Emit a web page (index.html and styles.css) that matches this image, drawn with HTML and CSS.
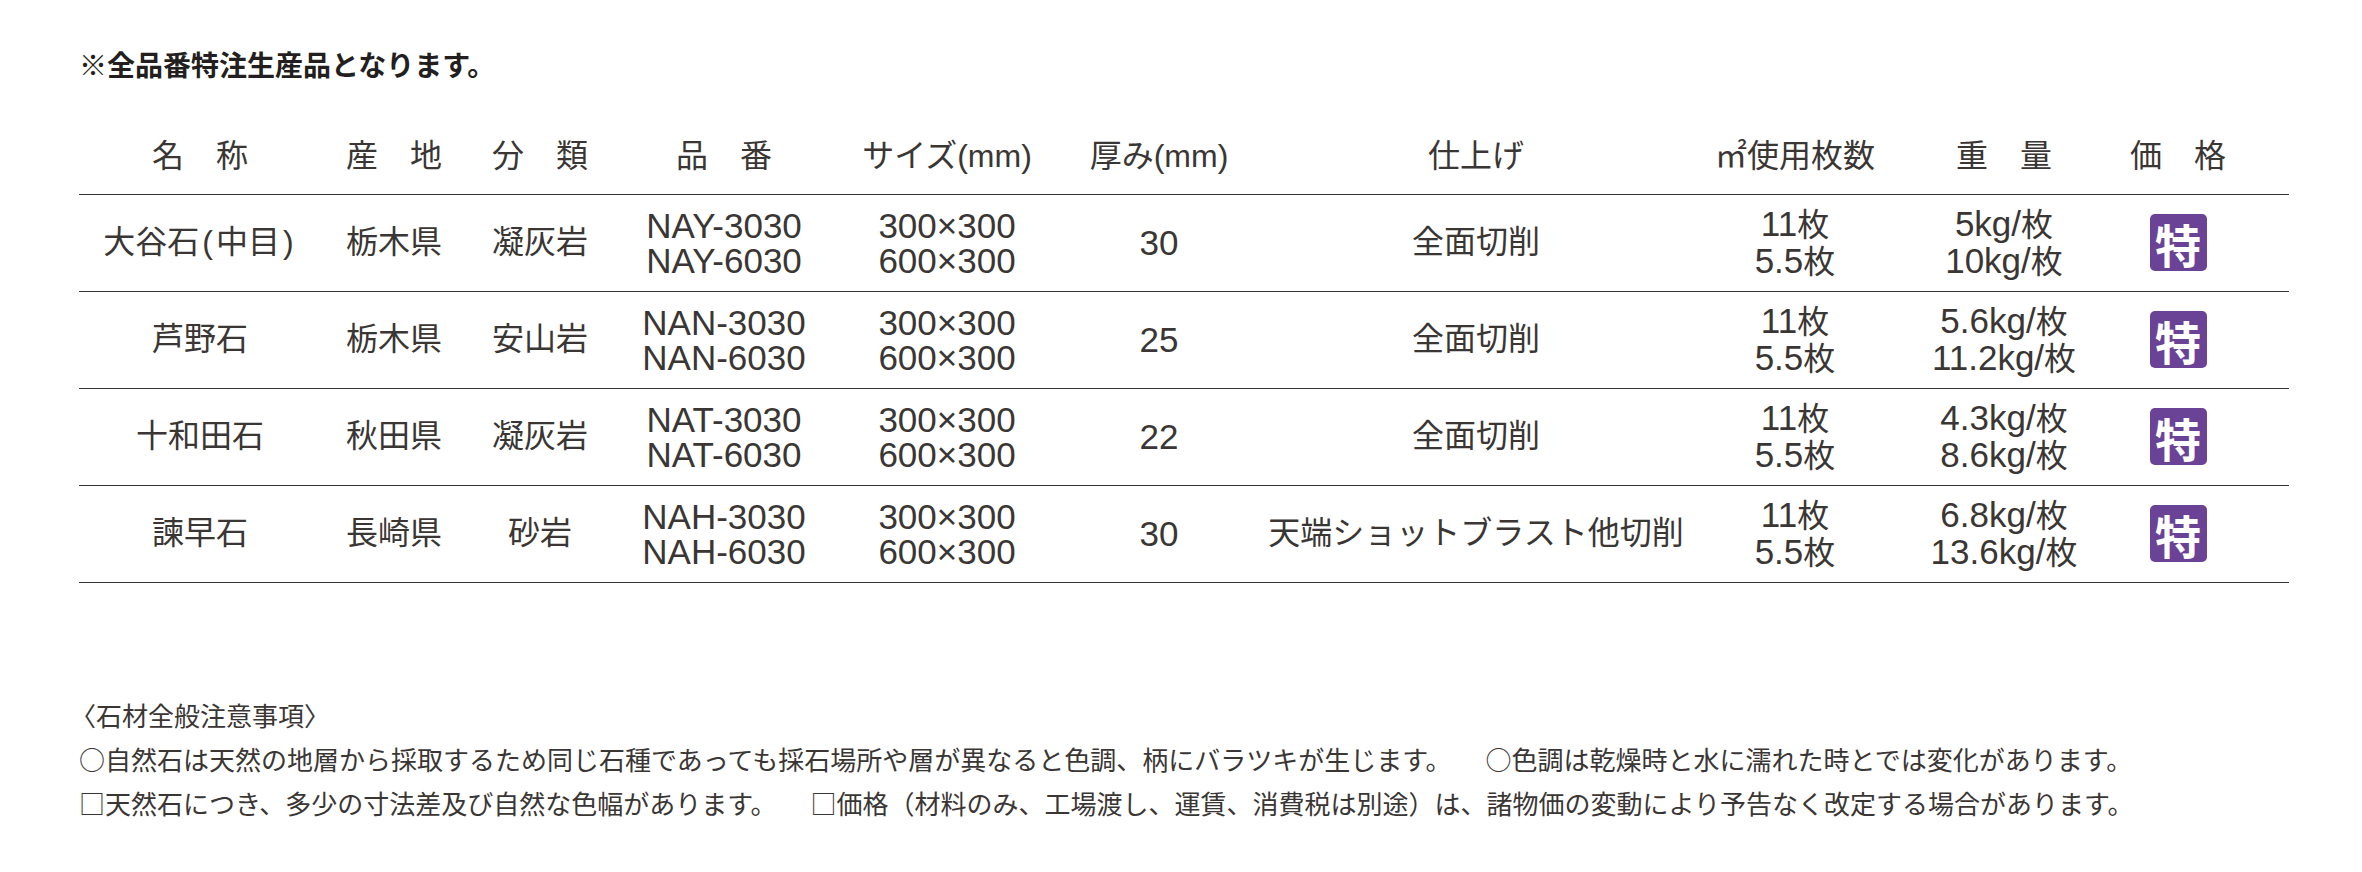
FILE: index.html
```html
<!DOCTYPE html>
<html lang="ja">
<head>
<meta charset="utf-8">
<title>石材製品一覧</title>
<link rel="stylesheet" href="styles.css">
</head>
<body>
<main class="page">
  <p class="notice">※全品番特注生産品となります。</p>

  <table class="stone-table">
    <colgroup>
      <col class="c-name">
      <col class="c-origin">
      <col class="c-type">
      <col class="c-code">
      <col class="c-size">
      <col class="c-thick">
      <col class="c-finish">
      <col class="c-count">
      <col class="c-weight">
      <col class="c-price">
    </colgroup>
    <thead>
      <tr>
        <th>名　称</th>
        <th>産　地</th>
        <th>分　類</th>
        <th>品　番</th>
        <th>サイズ(mm)</th>
        <th>厚み(mm)</th>
        <th>仕上げ</th>
        <th>㎡使用枚数</th>
        <th>重　量</th>
        <th class="price">価　格</th>
      </tr>
    </thead>
    <tbody>
      <tr>
        <td>大谷石<span class="p">(</span>中目<span class="p">)</span></td>
        <td>栃木県</td>
        <td>凝灰岩</td>
        <td class="n">NAY-3030<br>NAY-6030</td>
        <td class="n">300×300<br>600×300</td>
        <td class="n">30</td>
        <td>全面切削</td>
        <td class="n">11<span class="u">枚</span><br>5.5<span class="u">枚</span></td>
        <td class="n">5kg/<span class="u">枚</span><br>10kg/<span class="u">枚</span></td>
        <td class="price"><span class="badge">特</span></td>
      </tr>
      <tr>
        <td>芦野石</td>
        <td>栃木県</td>
        <td>安山岩</td>
        <td class="n">NAN-3030<br>NAN-6030</td>
        <td class="n">300×300<br>600×300</td>
        <td class="n">25</td>
        <td>全面切削</td>
        <td class="n">11<span class="u">枚</span><br>5.5<span class="u">枚</span></td>
        <td class="n">5.6kg/<span class="u">枚</span><br>11.2kg/<span class="u">枚</span></td>
        <td class="price"><span class="badge">特</span></td>
      </tr>
      <tr>
        <td>十和田石</td>
        <td>秋田県</td>
        <td>凝灰岩</td>
        <td class="n">NAT-3030<br>NAT-6030</td>
        <td class="n">300×300<br>600×300</td>
        <td class="n">22</td>
        <td>全面切削</td>
        <td class="n">11<span class="u">枚</span><br>5.5<span class="u">枚</span></td>
        <td class="n">4.3kg/<span class="u">枚</span><br>8.6kg/<span class="u">枚</span></td>
        <td class="price"><span class="badge">特</span></td>
      </tr>
      <tr>
        <td>諫早石</td>
        <td>長崎県</td>
        <td>砂岩</td>
        <td class="n">NAH-3030<br>NAH-6030</td>
        <td class="n">300×300<br>600×300</td>
        <td class="n">30</td>
        <td>天端ショットブラスト他切削</td>
        <td class="n">11<span class="u">枚</span><br>5.5<span class="u">枚</span></td>
        <td class="n">6.8kg/<span class="u">枚</span><br>13.6kg/<span class="u">枚</span></td>
        <td class="price"><span class="badge">特</span></td>
      </tr>
    </tbody>
  </table>

  <section class="notes">
    <h2 class="notes-title">〈石材全般注意事項〉</h2>
    <p>○自然石は天然の地層から採取するため同じ石種であっても採石場所や層が異なると色調、柄にバラツキが生じます。<span class="gap">　</span>○色調は乾燥時と水に濡れた時とでは変化があります。</p>
    <p>□天然石につき、多少の寸法差及び自然な色幅があります。<span class="gap">　</span>□価格（材料のみ、工場渡し、運賃、消費税は別途）は、諸物価の変動により予告なく改定する場合があります。</p>
  </section>
</main>
</body>
</html>
```

FILE: styles.css
```css
* {
  box-sizing: border-box;
}

body {
  margin: 0;
  background: #ffffff;
  color: #3a3634;
  font-family: "Liberation Sans", "Noto Sans CJK JP", sans-serif;
}

.page {
  width: 2362px;
  padding: 44px 0 0 79px;
}

.notice {
  margin: 0;
  font-family: "Noto Sans CJK JP", sans-serif;
  font-size: 28px;
  line-height: 40px;
  font-weight: 700;
  color: #231f20;
}

.stone-table {
  margin-top: 34px;
  width: 2210px;
  table-layout: fixed;
  border-collapse: collapse;
}

.c-name   { width: 242px; }
.c-origin { width: 146px; }
.c-type   { width: 146px; }
.c-code   { width: 222px; }
.c-size   { width: 224px; }
.c-thick  { width: 200px; }
.c-finish { width: 434px; }
.c-count  { width: 204px; }
.c-weight { width: 214px; }
.c-price  { width: 178px; }

.stone-table th,
.stone-table td {
  padding: 0;
  text-align: center;
  vertical-align: middle;
  border-bottom: 1px solid #333333;
  white-space: nowrap;
}

.stone-table th {
  height: 76px;
  font-size: 32px;
  font-weight: 400;
  line-height: 40px;
}

.stone-table td {
  height: 97px;
  font-size: 32px;
  line-height: 35px;
}

.stone-table .p {
  display: inline-block;
  padding: 0 3px;
}

.stone-table .n {
  font-size: 35px;
}

.stone-table .u {
  font-size: 32px;
}

.stone-table .price {
  padding-right: 44px;
}

.badge {
  display: inline-flex;
  align-items: center;
  justify-content: center;
  width: 57px;
  height: 57px;
  border-radius: 5px;
  background: #6a4296;
  color: #ffffff;
  font-family: "Noto Sans CJK JP", sans-serif;
  font-size: 46px;
  font-weight: 700;
  line-height: 1;
  vertical-align: middle;
}

.notes {
  margin-top: 110px;
  font-family: "Noto Sans CJK JP", sans-serif;
  font-size: 26px;
  line-height: 44px;
  color: #3a3634;
}

.notes-title {
  margin: 0 0 0 -9px;
  font-size: 26px;
  font-weight: 400;
  line-height: 44px;
}

.notes p {
  margin: 0;
  white-space: nowrap;
}

.notes .gap {
  display: inline-block;
  width: 34px;
}
```
